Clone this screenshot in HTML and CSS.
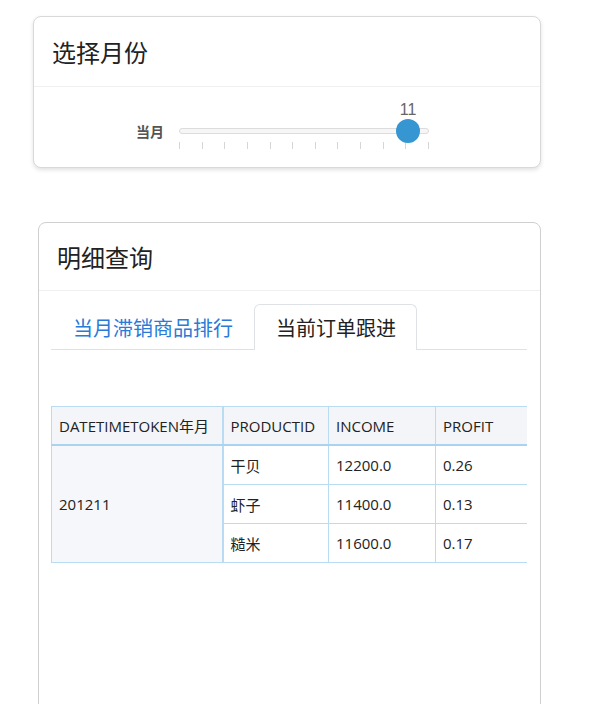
FILE: index.html
```html
<!DOCTYPE html>
<html lang="zh-CN">
<head>
  <meta charset="UTF-8">
  <meta name="viewport" content="width=device-width, initial-scale=1.0">
  <title>月度报表</title>
  <link rel="stylesheet" href="styles.css">
</head>
<body>
  <div class="card month-card">
    <div class="card-header">选择月份</div>
    <div class="card-body slider-row">
      <span class="slider-label">当月</span>
      <div class="slider">
        <div class="track"></div>
        <div class="thumb" style="left: 229px;"><span class="thumb-value">11</span></div>
        <div class="ticks">
          <i></i><i></i><i></i><i></i><i></i><i></i><i></i><i></i><i></i><i></i><i></i><i></i>
        </div>
      </div>
    </div>
  </div>

  <div class="card detail-card">
    <div class="card-header">明细查询</div>
    <div class="card-body detail-body">
      <ul class="tabs">
        <li class="tab">当月滞销商品排行</li>
        <li class="tab active">当前订单跟进</li>
      </ul>
      <div class="table-wrap">
        <table class="grid">
          <colgroup>
            <col class="col-date">
            <col class="col-id">
            <col class="col-num">
            <col class="col-last">
          </colgroup>
          <thead>
            <tr>
              <th class="first">DATETIMETOKEN年月</th>
              <th>PRODUCTID</th>
              <th>INCOME</th>
              <th>PROFIT</th>
            </tr>
          </thead>
          <tbody>
            <tr>
              <td class="group first" rowspan="3">201211</td>
              <td>干贝</td>
              <td>12200.0</td>
              <td>0.26</td>
            </tr>
            <tr>
              <td>虾子</td>
              <td>11400.0</td>
              <td>0.13</td>
            </tr>
            <tr>
              <td>糙米</td>
              <td>11600.0</td>
              <td>0.17</td>
            </tr>
          </tbody>
        </table>
      </div>
    </div>
  </div>
</body>
</html>
```

FILE: styles.css
```css
body {
  margin: 0;
  background: #fff;
  font-family: "Open Sans", "Noto Sans CJK SC", sans-serif;
  color: #333;
}

.card {
  background: #fff;
  border: 1px solid #d9d9d9;
  border-radius: 8px;
  box-sizing: border-box;
}

.month-card {
  margin: 16px 0 0 33px;
  width: 508px;
  height: 152px;
  box-shadow: 0 2px 4px rgba(0, 0, 0, 0.12);
}

.detail-card {
  margin: 54px 0 0 38px;
  width: 503px;
  height: 560px;
  border-color: #cfcfcf;
}

.card-header {
  font-family: "Noto Sans CJK SC", sans-serif;
  font-size: 24px;
  padding: 0 18px;
  height: 69px;
  line-height: 69px;
  border-bottom: 1px solid #f0f0f0;
  color: #222;
}

.detail-card .card-header {
  height: 67px;
  line-height: 67px;
}

.slider-row {
  display: flex;
  align-items: flex-start;
  padding: 33px 0 0 102px;
}

.slider-label {
  font-family: "Noto Sans CJK SC", sans-serif;
  font-size: 14px;
  font-weight: bold;
  color: #555;
  line-height: 20px;
  margin-top: 1px;
  width: 43px;
}

.slider {
  position: relative;
  width: 250px;
  height: 32px;
}

.track {
  margin-top: 8px;
  height: 6px;
  border: 1px solid #dcdcdc;
  border-radius: 4px;
  background: #f6f6f6;
  box-sizing: border-box;
}

.thumb {
  position: absolute;
  top: -1px;
  width: 24px;
  height: 24px;
  margin-left: -12px;
  border-radius: 50%;
  background: #3596d1;
}

.thumb-value {
  position: absolute;
  left: 50%;
  bottom: 24px;
  transform: translateX(-50%);
  font-family: "Liberation Sans", sans-serif;
  font-size: 16px;
  color: #666;
  line-height: 18px;
}

.ticks {
  display: flex;
  justify-content: space-between;
  margin-top: 8px;
}

.ticks i {
  display: block;
  width: 1px;
  height: 7px;
  background: #d6d6d6;
}

.detail-body {
  padding: 13px 13px 0 12px;
}

.tabs {
  list-style: none;
  margin: 0;
  padding: 0;
  display: flex;
  border-bottom: 1px solid #dee2e6;
  font-family: "Noto Sans CJK SC", sans-serif;
  font-size: 20px;
}

.tab {
  padding: 0 20px 0 21px;
  height: 44px;
  line-height: 46px;
  color: #2a7ad8;
  border: 1px solid transparent;
  border-bottom: 0;
  border-radius: 6px 6px 0 0;
  margin-bottom: -1px;
}

.tab.active {
  color: #222;
  background: #fff;
  border-color: #dee2e6;
  height: 45px;
}

.table-wrap {
  margin-top: 56px;
  overflow: hidden;
}

.grid {
  border-collapse: collapse;
  font-size: 15px;
  color: #222;
  width: 504px;
  table-layout: fixed;
}

.col-date { width: 171px; }
.col-id { width: 106px; }
.col-num { width: 107px; }
.col-last { width: 120px; }

.grid th,
.grid td {
  border: 1px solid #b9dcf2;
  text-align: left;
  font-weight: normal;
  padding: 0 7px;
  height: 38px;
  white-space: nowrap;
}

.grid th {
  background: #f3f5f8;
  height: 37px;
  border-bottom: 2px solid #a9d3ef;
}

.grid .first {
  border-right: 2px solid #b9dcf2;
}

.grid td.group {
  background: #f5f7fa;
}
```
